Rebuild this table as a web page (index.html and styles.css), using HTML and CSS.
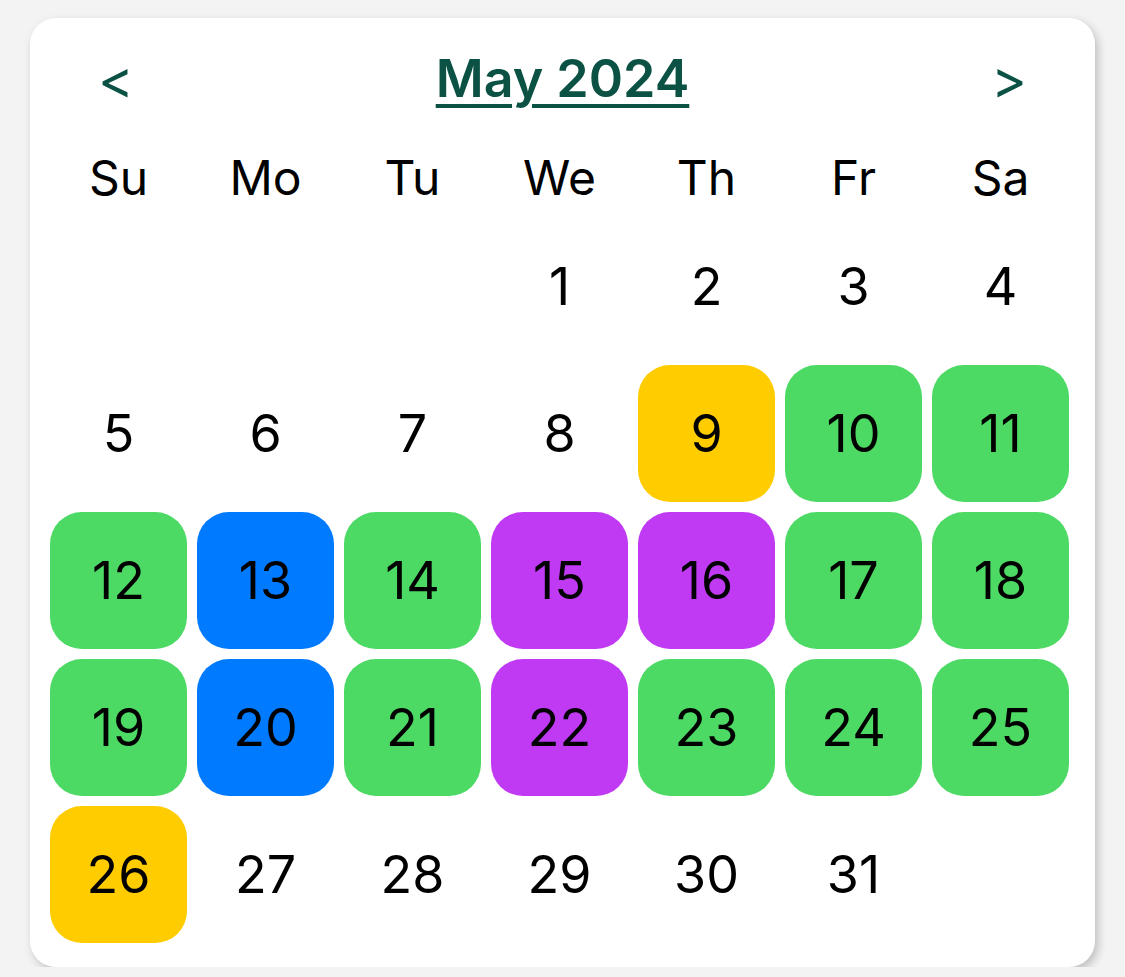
FILE: index.html
```html
<!DOCTYPE html>
<html>
<head>
<meta charset="utf-8">
<link rel="stylesheet" href="styles.css">
</head>
<body>
<div class="card">
  <div class="header">
    <span class="nav">&lt;</span>
    <span class="title">May 2024</span>
    <span class="nav">&gt;</span>
  </div>
  <div class="weekdays">
    <div class="dow">Su</div><div class="dow">Mo</div><div class="dow">Tu</div><div class="dow">We</div><div class="dow">Th</div><div class="dow">Fr</div><div class="dow">Sa</div>
  </div>
  <div class="days">
    <div class="day"></div><div class="day"></div><div class="day"></div>
    <div class="day">1</div><div class="day">2</div><div class="day">3</div><div class="day">4</div>
    <div class="day">5</div><div class="day">6</div><div class="day">7</div><div class="day">8</div>
    <div class="day yellow">9</div><div class="day green">10</div><div class="day green">11</div>
    <div class="day green">12</div><div class="day blue">13</div><div class="day green">14</div><div class="day purple">15</div><div class="day purple">16</div><div class="day green">17</div><div class="day green">18</div>
    <div class="day green">19</div><div class="day blue">20</div><div class="day green">21</div><div class="day purple">22</div><div class="day green">23</div><div class="day green">24</div><div class="day green">25</div>
    <div class="day yellow">26</div><div class="day">27</div><div class="day">28</div><div class="day">29</div><div class="day">30</div><div class="day">31</div><div class="day"></div>
  </div>
</div>
</body>
</html>
```

FILE: styles.css
```css
html, body {
  margin: 0;
  padding: 0;
  background: #f3f3f3;
  font-family: Inter, "Noto Sans", sans-serif;
}
body {
  padding: 18px 30px 0 30px;
}
.card {
  width: 1065px;
  height: 949px;
  box-sizing: border-box;
  background: #fff;
  border-radius: 26px;
  box-shadow: 3px 4px 10px rgba(0,0,0,0.22);
  padding: 20px 26px 24px 20px;
}
.header {
  display: flex;
  align-items: center;
  justify-content: space-between;
  height: 80px;
  padding: 0 42px 0 48px;
}
.nav {
  color: #0c5244;
  font-size: 54px;
  font-weight: 400;
  line-height: 1;
  position: relative;
  top: 2px;
}
.title {
  color: #0c5244;
  font-size: 52px;
  font-weight: 600;
  text-decoration: underline;
  text-decoration-thickness: 4px;
  text-underline-offset: 7px;
}
.weekdays {
  display: grid;
  grid-template-columns: repeat(7, 137px);
  column-gap: 10px;
  height: 82px;
  padding-top: 18px;
}
.days {
  display: grid;
  grid-template-columns: repeat(7, 137px);
  grid-auto-rows: 137px;
  gap: 10px;
}
.dow {
  display: flex;
  align-items: center;
  justify-content: center;
  font-size: 48px;
  color: #000;
}
.day {
  display: flex;
  align-items: center;
  justify-content: center;
  font-size: 52px;
  color: #000;
  border-radius: 32px;
}
.green { background: #4cd964; }
.blue { background: #007aff; }
.purple { background: #bf3af2; }
.yellow { background: #ffcc00; }
```
